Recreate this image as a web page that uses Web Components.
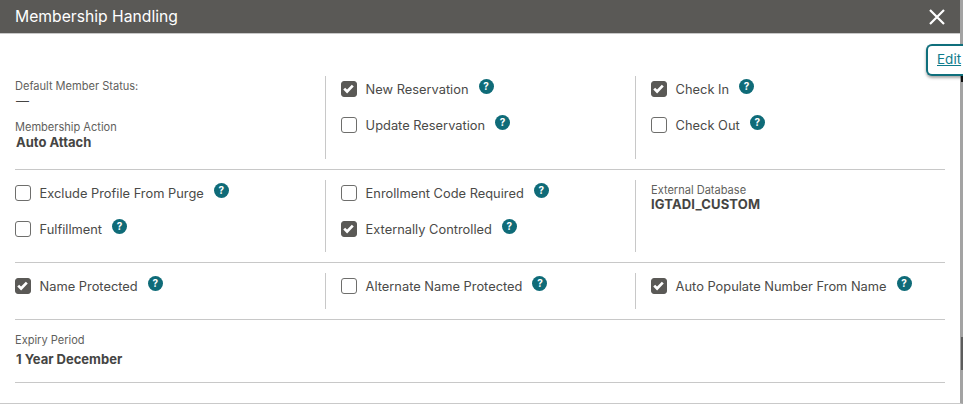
<!DOCTYPE html>
<html lang="en">
<head>
<meta charset="utf-8">
<title>Membership Handling</title>
<style>
	html, body {
		margin: 0;
		height: 100%;
		overflow: hidden;
		background: #fff;
	}

	body {
		font-family: Inter, "Liberation Sans", sans-serif;
		color: #4a4a48;
	}
</style>
</head>
<body>
<mh-panel heading="Membership Handling">
	<mh-row class="first">
		<mh-cell>
			<mh-field label="Default Member Status:" value="—" plain></mh-field>
			<mh-field label="Membership Action" value="Auto Attach"></mh-field>
		</mh-cell>
		<mh-cell>
			<mh-check checked>New Reservation</mh-check>
			<mh-check>Update Reservation</mh-check>
		</mh-cell>
		<mh-cell>
			<mh-check checked>Check In</mh-check>
			<mh-check>Check Out</mh-check>
		</mh-cell>
	</mh-row>
	<mh-row>
		<mh-cell>
			<mh-check>Exclude Profile From Purge</mh-check>
			<mh-check>Fulfillment</mh-check>
		</mh-cell>
		<mh-cell>
			<mh-check>Enrollment Code Required</mh-check>
			<mh-check checked>Externally Controlled</mh-check>
		</mh-cell>
		<mh-cell>
			<mh-field class="tight" label="External Database" value="IGTADI_CUSTOM"></mh-field>
		</mh-cell>
	</mh-row>
	<mh-row>
		<mh-cell>
			<mh-check checked>Name Protected</mh-check>
		</mh-cell>
		<mh-cell>
			<mh-check>Alternate Name Protected</mh-check>
		</mh-cell>
		<mh-cell>
			<mh-check checked>Auto Populate Number From Name</mh-check>
		</mh-cell>
	</mh-row>
	<mh-row class="single">
		<mh-cell>
			<mh-field class="loose" label="Expiry Period" value="1 Year December"></mh-field>
		</mh-cell>
	</mh-row>
	<edit-tab slot="overlay">Edit</edit-tab>
</mh-panel>

<script>
const
	panelTemplate = document.createElement('template'),
	checkTemplate = document.createElement('template');

panelTemplate.innerHTML = `
	<style>
		:host {
			display: flex;
			flex-direction: column;
			position: relative;
			height: 404px;
			box-sizing: border-box;
			border-right: 3px solid #a3a3a3;
			border-bottom: 1px solid #c9c9c9;
			background: #fff;
		}

		.header {
			flex: 0 0 33px;
			display: flex;
			align-items: center;
			justify-content: space-between;
			padding: 0 14px 0 15px;
			background: #5a5956;
			border-bottom: 1px solid #c8c8c8;
			color: #fff;
			font-size: 15.7px;
		}

		.close {
			display: block;
		}

		.content {
			flex: 1;
			padding: 42px 15px 0;
			width: 930px;
		}

		.thumb {
			position: absolute;
			right: -3px;
			width: 2px;
		}

		.thumb.top {
			top: 75px;
			height: 7px;
			background: #111;
		}

		.thumb.bottom {
			top: 337px;
			height: 33px;
			background: #5c5c5c;
		}
	</style>

	<div class="header">
		<span class="name"></span>
		<svg class="close" width="18" height="18" viewBox="0 0 18 18">
			<path d="M2 2 L16 16 M16 2 L2 16" stroke="#fff" stroke-width="2.2" fill="none"/>
		</svg>
	</div>
	<div class="content"><slot></slot></div>
	<span class="thumb top"></span>
	<span class="thumb bottom"></span>
	<slot name="overlay"></slot>
`;

customElements.define('mh-panel', class extends HTMLElement {
	constructor() {
		super();
		this
			.attachShadow({ mode: 'open' })
			.appendChild(panelTemplate.content.cloneNode(true));

		this.shadowRoot.querySelector('.name').textContent = this.getAttribute('heading');
	}
});

customElements.define('mh-row', class extends HTMLElement {
	constructor() {
		super();
		this.attachShadow({ mode: 'open' }).innerHTML = `
			<style>
				:host {
					display: grid;
					grid-template-columns: 310px 310px 310px;
					box-sizing: border-box;
					padding: 10px 0;
					border-bottom: 1px solid #c8c8c8;
				}

				:host(.first) {
					padding-top: 0;
					grid-auto-rows: 83px;
				}

				:host(.single) {
					padding: 10px 0 15px;
				}
			</style>
			<slot></slot>
		`;
	}
});

customElements.define('mh-cell', class extends HTMLElement {
	constructor() {
		super();
		this.attachShadow({ mode: 'open' }).innerHTML = `
			<style>
				:host {
					display: block;
					box-sizing: border-box;
					padding-left: 15px;
					border-left: 1px solid #c8c8c8;
				}

				:host(:first-child) {
					padding-left: 0;
					border-left: 0;
				}
			</style>
			<slot></slot>
		`;
	}
});

customElements.define('mh-field', class extends HTMLElement {
	constructor() {
		super();
		this.attachShadow({ mode: 'open' }).innerHTML = `
			<style>
				:host {
					display: block;
					margin-bottom: 8px;
				}

				:host(:last-child) {
					margin-bottom: 0;
				}

				.label {
					font-size: 11.05px;
					line-height: 14px;
					color: #5f5f5d;
					padding-top: 3px;
				}

				.value {
					font-size: 13px;
					line-height: 16px;
					font-weight: 700;
					color: #454543;
					padding-left: 1px;
				}

				:host([plain]) .value {
					font-weight: 400;
				}

				:host(.tight) .value {
					margin-top: -1px;
					padding-left: 0;
					letter-spacing: .15px;
				}

				:host(.loose) .value {
					margin-top: 4px;
				}
			</style>
			<div class="label"></div>
			<div class="value"></div>
		`;
		this.shadowRoot.querySelector('.label').textContent = this.getAttribute('label');
		this.shadowRoot.querySelector('.value').textContent = this.getAttribute('value');
	}
});

checkTemplate.innerHTML = `
	<style>
		:host {
			display: flex;
			align-items: center;
			height: 26px;
			margin-bottom: 10px;
			font-size: 12.85px;
			color: #4a4a48;
		}

		.box {
			flex: 0 0 16px;
			box-sizing: border-box;
			width: 16px;
			height: 16px;
			margin-right: 8.6px;
			border: 1.5px solid #6e6e6c;
			border-radius: 3px;
			background: #fff;
		}

		:host([checked]) .box {
			background: #5a5956;
			border-color: #5a5956;
		}

		.box svg {
			display: none;
			width: 13px;
			height: 13px;
		}

		:host([checked]) .box svg {
			display: block;
		}
	</style>

	<span class="box">
		<svg viewBox="0 0 13 13"><path d="M2.2 6.6 L5.1 9.5 L10.8 3.6" stroke="#fff" stroke-width="2.7" fill="none"/></svg>
	</span>
	<slot></slot>
	<mh-help></mh-help>
`;

customElements.define('mh-check', class extends HTMLElement {
	constructor() {
		super();
		this
			.attachShadow({ mode: 'open' })
			.appendChild(checkTemplate.content.cloneNode(true));
	}
});

customElements.define('mh-help', class extends HTMLElement {
	constructor() {
		super();
		this.attachShadow({ mode: 'open' }).innerHTML = `
			<style>
				:host {
					display: flex;
					align-items: center;
					justify-content: center;
					width: 15px;
					height: 15px;
					margin: 0 0 6px 10px;
					border-radius: 50%;
					background: #0f6b78;
					color: #fff;
					font-size: 10px;
					font-weight: 700;
					line-height: 15px;
				}
			</style>
			?
		`;
	}
});

customElements.define('edit-tab', class extends HTMLElement {
	constructor() {
		super();
		this.attachShadow({ mode: 'open' }).innerHTML = `
			<style>
				:host {
					position: absolute;
					top: 44px;
					right: -3px;
					box-sizing: border-box;
					width: 37px;
					height: 32px;
					padding-left: 9px;
					border: 2px solid #0f6f7c;
					border-right: 0;
					border-radius: 6px 0 0 6px;
					background: #fff;
					box-shadow: 0 2px 3px rgba(0, 0, 0, .35);
					color: #0f7c8c;
					font-size: 13.5px;
					line-height: 27px;
					text-decoration: underline;
					white-space: nowrap;
					overflow: hidden;
				}
			</style>
			<slot></slot>
		`;
	}
});
</script>
</body>
</html>
